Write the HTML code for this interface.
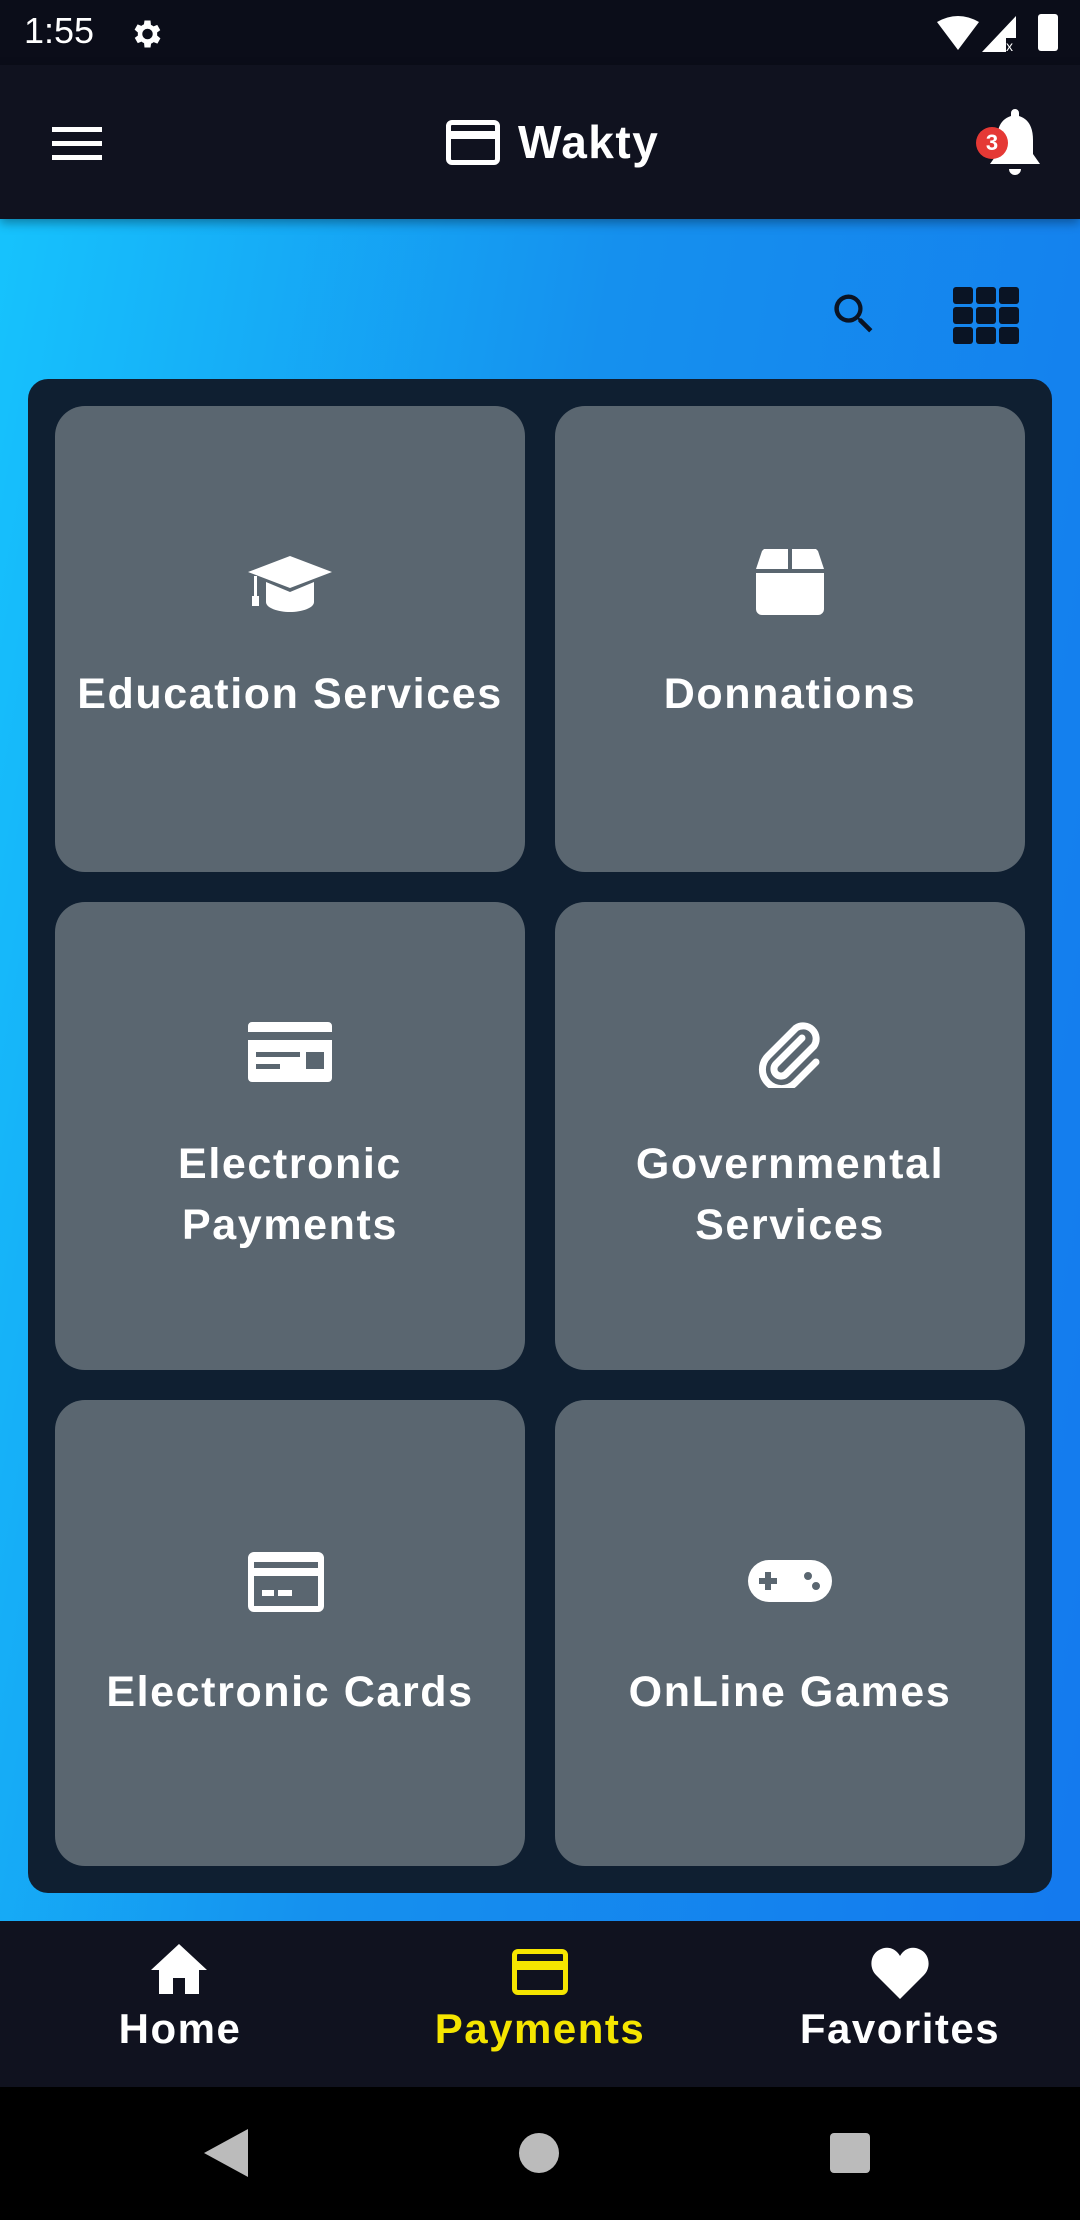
<!DOCTYPE html>
<html><head><meta charset="utf-8"><style>
*{margin:0;padding:0;box-sizing:border-box}
body{width:1080px;height:2220px;position:relative;overflow:hidden;font-family:"Liberation Sans",sans-serif;background:linear-gradient(100deg,#16c6fe 0%,#1590ee 45%,#1478ee 100%)}
.abs{position:absolute}
.status{left:0;top:0;width:1080px;height:65px;background:#0b0d19;color:#fff}
.appbar{left:0;top:65px;width:1080px;height:154px;background:#10121f;box-shadow:0 4px 10px rgba(0,0,0,.35)}
.panel{left:28px;top:379px;width:1024px;height:1514px;background:#0f1f31;border-radius:20px}
.card{position:absolute;width:470px;background:#5a6670;border-radius:30px;color:#fff;font-weight:bold;font-size:43px;text-align:center;line-height:61px;letter-spacing:1.6px}
.card svg{position:absolute;left:50%;transform:translateX(-50%)}
.bnav{left:0;top:1921px;width:1080px;height:166px;background:#10121f}
.sys{left:0;top:2087px;width:1080px;height:133px;background:#000}
.nl{position:absolute;top:84px;font-weight:bold;font-size:42px;letter-spacing:1.5px;text-align:center;width:360px}
</style></head><body>
<div class="abs status">
 <div class="abs" style="left:24px;top:10px;font-size:36px">1:55</div>
 <svg class="abs" style="left:128px;top:16px" width="36" height="36" viewBox="0 0 24 24"><path fill="#fff" d="M19.4 13a7.5 7.5 0 000-2l2.1-1.6-2-3.5-2.5 1a7 7 0 00-1.7-1L15 3h-4l-.4 2.6a7 7 0 00-1.7 1l-2.5-1-2 3.5L6.6 11a7.5 7.5 0 000 2l-2.1 1.6 2 3.5 2.5-1a7 7 0 001.7 1L11 21h4l.4-2.6a7 7 0 001.7-1l2.5 1 2-3.5zM13 15.5a3.5 3.5 0 110-7 3.5 3.5 0 010 7z"/></svg>
 <svg class="abs" style="left:937px;top:16px" width="42" height="34" viewBox="0 0 42 34"><path fill="#fff" d="M0 6Q21-6 42 6L21 34z"/></svg>
 <svg class="abs" style="left:982px;top:16px" width="36" height="36" viewBox="0 0 36 36"><path fill="#fff" d="M34 0V22H24V36H0z"/><text x="24" y="35" fill="#fff" font-size="14">x</text></svg>
 <div class="abs" style="left:1038px;top:14px;width:20px;height:37px;background:#fff;border-radius:3px"></div>
</div>
<div class="abs appbar">
 <div class="abs" style="left:52px;top:62px;width:50px;height:5px;background:#fff;box-shadow:0 14px 0 #fff,0 28px 0 #fff"></div>
 <div class="abs" style="left:446px;top:55px;width:54px;height:45px;border:5px solid #fff;border-radius:6px"><div style="margin-top:6px;height:8px;background:#fff"></div></div>
 <div class="abs" style="left:518px;top:50px;color:#fff;font-weight:bold;font-size:46px;letter-spacing:1.5px">Wakty</div>
 <svg class="abs" style="left:984px;top:44px" width="62" height="70" viewBox="0 0 62 70"><path fill="#fff" d="M31 0a4 4 0 014 4v3c10 3 14 12 14 24v14l7 10H6l7-10V31c0-12 4-21 14-24V4a4 4 0 014-4zM25 60h12a6 6 0 01-12 0z"/></svg>
 <div class="abs" style="left:976px;top:62px;width:32px;height:32px;border-radius:50%;background:#e53935;color:#fff;font-size:22px;font-weight:bold;text-align:center;line-height:32px">3</div>
</div>
<svg class="abs" style="left:828px;top:288px" width="52" height="52" viewBox="0 0 24 24"><path fill="#0a1424" d="M15.5 14h-.8l-.3-.3A6.5 6.5 0 109.5 16a6.5 6.5 0 004.2-1.6l.3.3v.8l5 5 1.5-1.5zm-6 0a4.5 4.5 0 110-9 4.5 4.5 0 010 9z"/></svg>
<svg class="abs" style="left:953px;top:287px" width="67" height="58" viewBox="0 0 67 58"><g fill="#0a1424"><rect x="0" y="0" width="20" height="17" rx="3"/><rect x="23" y="0" width="20" height="17" rx="3"/><rect x="46" y="0" width="20" height="17" rx="3"/><rect x="0" y="20" width="20" height="17" rx="3"/><rect x="23" y="20" width="20" height="17" rx="3"/><rect x="46" y="20" width="20" height="17" rx="3"/><rect x="0" y="40" width="20" height="17" rx="3"/><rect x="23" y="40" width="20" height="17" rx="3"/><rect x="46" y="40" width="20" height="17" rx="3"/></g></svg>
<div class="abs panel"></div>
<div class="card" style="left:55px;top:406px;height:466px">
 <svg style="top:150px" width="84" height="56" viewBox="0 0 84 56"><path fill="#fff" d="M42 0L84 16 42 32 0 16z M18 26v20c0 6 12 10 24 10s24-4 24-10V26L42 36z M6 20h3v20h-3z M4 40h7v10h-7z"/></svg>
 <div style="position:absolute;top:258px;width:100%">Education Services</div>
</div>
<div class="card" style="left:555px;top:406px;height:466px">
 <svg style="top:143px" width="68" height="66" viewBox="0 0 68 66"><path fill="#fff" d="M8 0h24v20H0L6 2zM36 0h24l2 2 6 18H36zM0 24h68v36a6 6 0 01-6 6H6a6 6 0 01-6-6z"/></svg>
 <div style="position:absolute;top:258px;width:100%">Donnations</div>
</div>
<div class="card" style="left:55px;top:902px;height:468px">
 <svg style="top:120px" width="84" height="60" viewBox="0 0 84 60"><path fill="#fff" fill-rule="evenodd" d="M4 0h76a4 4 0 014 4v52a4 4 0 01-4 4H4a4 4 0 01-4-4V4a4 4 0 014-4zM0 10v8h84v-8zM8 30v5h44v-5zM8 42v5h24v-5zM58 30v17h18V30z"/></svg>
 <div style="position:absolute;top:232px;width:100%">Electronic<br>Payments</div>
</div>
<div class="card" style="left:555px;top:902px;height:468px">
 <svg style="top:116px" width="64" height="70" viewBox="0 0 64 70"><path fill="none" stroke="#fff" stroke-width="7" stroke-linecap="round" d="M44 20L18 46a7 7 0 0010 10L56 28a13 13 0 00-18-18L10 38a19 19 0 0027 27L58 44"/></svg>
 <div style="position:absolute;top:232px;width:100%">Governmental<br>Services</div>
</div>
<div class="card" style="left:55px;top:1400px;height:466px">
 <svg style="top:152px;margin-left:-4px" width="76" height="60" viewBox="0 0 76 60"><path fill="#fff" fill-rule="evenodd" d="M6 0h64a6 6 0 016 6v48a6 6 0 01-6 6H6a6 6 0 01-6-6V6a6 6 0 016-6zM6 10v6h64v-6zM6 24v30h64V24zM14 38h12v6H14zM30 38h14v6H30z"/></svg>
 <div style="position:absolute;top:262px;width:100%">Electronic Cards</div>
</div>
<div class="card" style="left:555px;top:1400px;height:466px">
 <svg style="top:160px" width="84" height="42" viewBox="0 0 84 42"><path fill="#fff" fill-rule="evenodd" d="M21 0h42a21 21 0 010 42H21a21 21 0 010-42zM17 18v-6h6v6h6v6h-6v6h-6v-6h-6v-6zM60 12a4 4 0 100 8 4 4 0 000-8zM68 22a4 4 0 100 8 4 4 0 000-8z"/></svg>
 <div style="position:absolute;top:262px;width:100%">OnLine Games</div>
</div>
<div class="abs bnav">
 <svg class="abs" style="left:151px;top:23px" width="56" height="50" viewBox="0 0 56 50"><path fill="#fff" d="M28 0L56 26h-8v24H34V34H22v16H8V26H0z"/></svg>
 <div class="nl" style="left:0;color:#fff">Home</div>
 <div class="abs" style="left:512px;top:28px;width:56px;height:46px;border:5px solid #f5e500;border-radius:6px"><div style="margin-top:7px;height:9px;background:#f5e500"></div></div>
 <div class="nl" style="left:360px;color:#f5e500">Payments</div>
 <svg class="abs" style="left:871px;top:26px" width="58" height="52" viewBox="0 0 58 52"><path fill="#fff" d="M29 52L5 28C-2 21-1 8 8 3s17-1 21 6c4-7 12-11 21-6s10 18 3 25z"/></svg>
 <div class="nl" style="left:720px;color:#fff">Favorites</div>
</div>
<div class="abs sys">
 <svg class="abs" style="left:204px;top:42px" width="44" height="48" viewBox="0 0 44 48"><path fill="#bbb" d="M44 0v48L0 24z"/></svg>
 <div class="abs" style="left:519px;top:46px;width:40px;height:40px;border-radius:50%;background:#bbb"></div>
 <div class="abs" style="left:830px;top:46px;width:40px;height:40px;border-radius:4px;background:#bbb"></div>
</div>
</body></html>
